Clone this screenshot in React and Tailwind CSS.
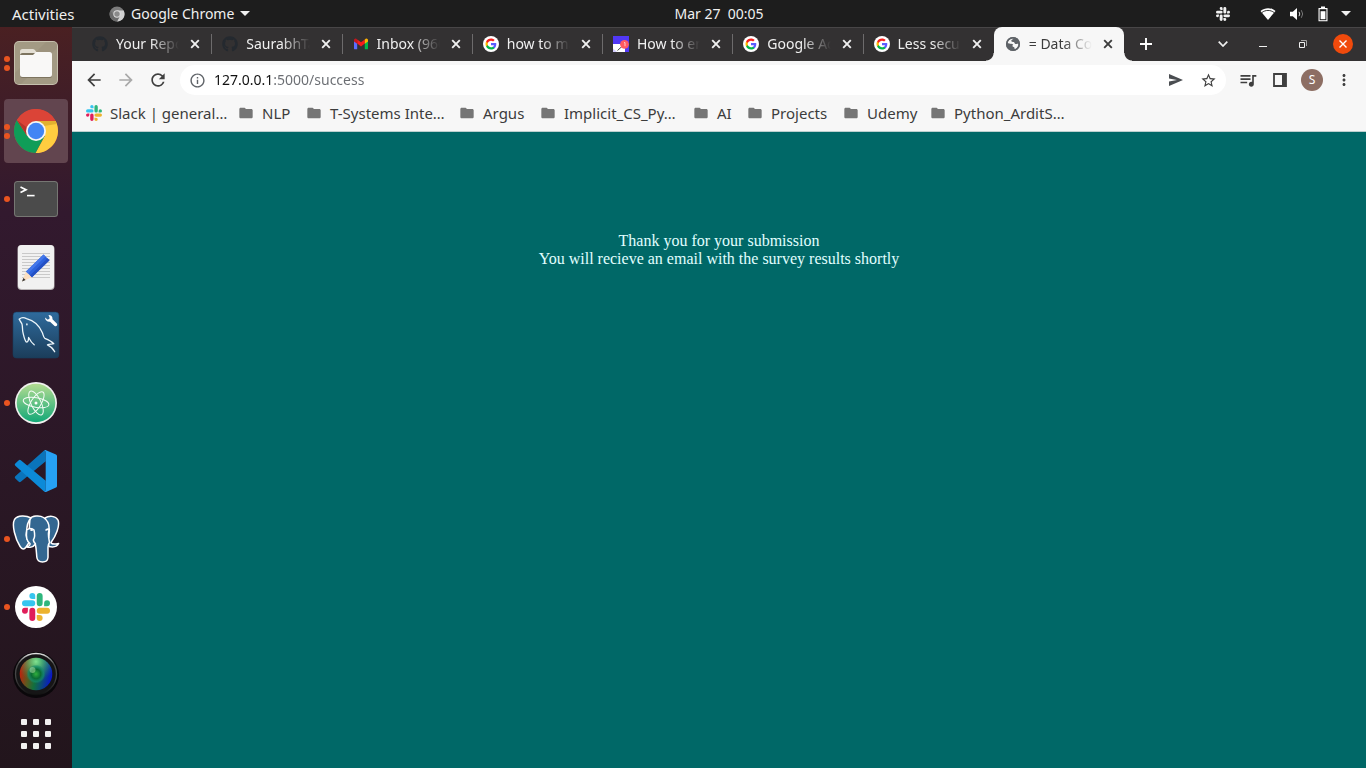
import React from "react";
import { FaGithub } from "react-icons/fa";
import {
  MdArrowBack,
  MdArrowForward,
  MdRefresh,
  MdInfoOutline,
  MdOutlineStarBorder,
  MdQueueMusic,
  MdMoreVert,
  MdFolder,
} from "react-icons/md";

const SLACK_RED =
  "M5.042 15.165a2.528 2.528 0 0 1-2.52 2.523A2.528 2.528 0 0 1 0 15.165a2.527 2.527 0 0 1 2.522-2.52h2.52v2.52zM6.313 15.165a2.527 2.527 0 0 1 2.521-2.52 2.527 2.527 0 0 1 2.521 2.52v6.313A2.528 2.528 0 0 1 8.834 24a2.528 2.528 0 0 1-2.521-2.522v-6.313z";
const SLACK_BLUE =
  "M8.834 5.042a2.528 2.528 0 0 1-2.521-2.52A2.528 2.528 0 0 1 8.834 0a2.528 2.528 0 0 1 2.521 2.522v2.52H8.834zM8.834 6.313a2.528 2.528 0 0 1 2.521 2.521 2.528 2.528 0 0 1-2.521 2.521H2.522A2.528 2.528 0 0 1 0 8.834a2.528 2.528 0 0 1 2.522-2.521h6.312z";
const SLACK_GREEN =
  "M18.956 8.834a2.528 2.528 0 0 1 2.522-2.521A2.528 2.528 0 0 1 24 8.834a2.528 2.528 0 0 1-2.522 2.521h-2.522V8.834zM17.688 8.834a2.528 2.528 0 0 1-2.523 2.521 2.527 2.527 0 0 1-2.52-2.521V2.522A2.527 2.527 0 0 1 15.165 0a2.528 2.528 0 0 1 2.523 2.522v6.312z";
const SLACK_YELLOW =
  "M15.165 18.956a2.528 2.528 0 0 1 2.523 2.522A2.528 2.528 0 0 1 15.165 24a2.527 2.527 0 0 1-2.52-2.522v-2.522h2.52zM15.165 17.688a2.527 2.527 0 0 1-2.52-2.523 2.526 2.526 0 0 1 2.52-2.52h6.313A2.527 2.527 0 0 1 24 15.165a2.528 2.528 0 0 1-2.522 2.523h-6.313z";

function SlackMark({ className, mono }) {
  return (
    <svg viewBox="0 0 24 24" className={className} aria-hidden="true">
      <path d={SLACK_RED} fill={mono || "#e01e5a"} />
      <path d={SLACK_BLUE} fill={mono || "#36c5f0"} />
      <path d={SLACK_GREEN} fill={mono || "#2eb67d"} />
      <path d={SLACK_YELLOW} fill={mono || "#ecb22e"} />
    </svg>
  );
}

function GoogleIcon() {
  return (
    <svg viewBox="0 0 32 32" className="size-4" aria-hidden="true">
      <circle cx="16" cy="16" r="16" fill="#fff" />
      <g transform="translate(4 4)">
        <path fill="#5b5cff" d="M22.56 12.25c0-.78-.07-1.53-.2-2.25H12v4.26h5.92c-.26 1.37-1.04 2.53-2.21 3.31v2.77h3.57c2.08-1.92 3.28-4.74 3.28-8.09z" />
        <path fill="#00b84a" d="M12 23c2.97 0 5.46-.98 7.28-2.66l-3.57-2.77c-.98.66-2.23 1.06-3.71 1.06-2.86 0-5.29-1.93-6.16-4.53H2.18v2.84C3.99 20.53 7.7 23 12 23z" />
        <path fill="#ffb400" d="M5.84 14.09c-.22-.66-.35-1.36-.35-2.09s.13-1.43.35-2.09V7.07H2.18C1.43 8.55 1 10.22 1 12s.43 3.45 1.18 4.93l3.66-2.84z" />
        <path fill="#f8201c" d="M12 5.38c1.62 0 3.06.56 4.21 1.64l3.15-3.15C17.45 2.09 14.97 1 12 1 7.7 1 3.99 3.47 2.18 7.07l3.66 2.84c.87-2.6 3.3-4.53 6.16-4.53z" />
      </g>
    </svg>
  );
}

function GmailIcon() {
  return (
    <svg viewBox="0 0 16 16" className="size-4" aria-hidden="true">
      <path d="M1 5v7.4c0 .5.4.9.9.9h2.3V6.6L1 4.4z" fill="#5b6cff" />
      <path d="M11.8 6.6v6.7h2.3c.5 0 .9-.4.9-.9V4.6z" fill="#00b84a" />
      <path d="M4.2 3.4v4.2L8 10.4l3.8-2.8V3.4L8 6.2z" fill="#f81c1c" />
      <path d="M1 4.4v1l3.2 2.3V3.4l-.7-.5C2.400 2.100 1 2.900 1 4.400z" fill="#c4161c" />
      <path d="M15 4.400v1l-3.200 2.300V3.400l.7-.5C13.600 2.100 15 2.900 15 4.400z" fill="#ffb400" />
    </svg>
  );
}

function ArticleIcon() {
  return (
    <svg viewBox="0 0 16 16" className="size-4" aria-hidden="true">
      <path d="M0 0h16v16H0z" fill="#5138f6" />
      <path d="M0 8h8l4 4v4H0z" fill="#fff" />
      <path d="M4.500 14.500L10 9.500" stroke="#333" strokeWidth=".9" fill="none" />
      <path d="M0 12.500l4 3.500H0z" fill="#5138f6" opacity=".25" />
      <circle cx="11.500" cy="8.300" r="4.400" fill="#ff5a5f" />
      <path d="M11 6.600h1v3.600" stroke="#ffd4d4" strokeWidth=".9" fill="none" />
    </svg>
  );
}

function GlobeIcon() {
  return (
    <svg viewBox="0 0 16 16" className="size-4" aria-hidden="true">
      <circle cx="8" cy="8" r="7" fill="#5f6368" />
      <path d="M8.600 2.500C7.800 3.600 6.400 3.500 6.300 4.700c0 1.200 1.500 1 2.500 1.300 1 .4.500 1.700 1.500 2 1 .2 1.700-.6 2.900-.2.600 1.800-.6 4.200-3 5.200-1.100.2-.5-1.100-1-1.700-.6-.6-1.700-.2-2.300-1 .2-1 1.200-.8 1.300-1.600-.4-1-1.800-.6-2.800-.9-1-.2-1.800-.9-2.600-.5.100-2.700 2.400-5 5.800-4.800z" fill="#f7f7f7" />
      <circle cx="8" cy="8" r="6.300" fill="none" stroke="#5f6368" strokeWidth="1.500" />
    </svg>
  );
}

function ChromeIcon({ className }) {
  return (
    <svg viewBox="0 0 44 44" className={className} aria-hidden="true">
      <circle cx="22" cy="22" r="22" fill="#db4437" />
      <path d="M22 12H41.600A22 22 0 0 1 21.500 44L30.700 27z" fill="#ffcd40" />
      <path d="M22 12h19.600l1 3L30 17z" fill="#e2b130" />
      <path d="M2.900 11A22 22 0 0 0 21.500 44L30.700 27 13.300 27z" fill="#0f9d58" />
      <path d="M2.900 11A22 22 0 0 1 41.600 12H22L13.300 27z" fill="#db4437" />
      <path d="M2.900 11l10.400 16-1-9z" fill="#b5352b" />
      <circle cx="22" cy="22" r="10" fill="#f5f5f5" />
      <circle cx="22" cy="22" r="8.200" fill="#4285f4" />
    </svg>
  );
}

function ChromeGrayIcon() {
  return (
    <svg viewBox="0 0 16 16" className="size-4" aria-hidden="true">
      <circle cx="8" cy="8" r="7.500" fill="#7c7c7c" />
      <path d="M8 4.500h6.700A7.500 7.500 0 0 1 8 15.500L11 9.800z" fill="#d2d2d2" />
      <path d="M1.400 4.500A7.500 7.500 0 0 0 8 15.500L11 9.800 5 9.800z" fill="#6b6b6b" />
      <circle cx="8" cy="8" r="3.700" fill="#dcdcdc" />
      <circle cx="8" cy="8" r="2.700" fill="#8a8a8a" />
    </svg>
  );
}

function FilesIcon() {
  return (
    <svg viewBox="0 0 48 48" className="size-12" aria-hidden="true">
      <rect x="2" y="2" width="44" height="44" rx="5" fill="#c6c0ae" />
      <rect x="3" y="3" width="42" height="42" rx="4" fill="#a39a84" />
      <path d="M3 34L34 3h7a4 4 0 0 1 4 4v2L9 45H7a4 4 0 0 1-4-4z" fill="#999079" opacity=".6" />
      <path d="M8 12.500a2.500 2.500 0 0 1 2.500-2.500h10.200a3 3 0 0 1 2.200 1L25 14v6H8z" fill="#e4dfd4" />
      <rect x="8" y="14" width="32" height="25" rx="2.500" fill="#7d745f" />
      <path d="M8 16h13l3-3h13.500a2.500 2.500 0 0 1 2.500 2.500v20a2.500 2.500 0 0 1-2.500 2.500h-27A2.500 2.500 0 0 1 8 35.500z" fill="#f9f8f7" />
    </svg>
  );
}

function TerminalIcon() {
  return (
    <svg viewBox="0 0 48 48" className="size-12" aria-hidden="true">
      <rect x="2" y="6" width="44" height="36" rx="3.500" fill="#767773" />
      <rect x="3" y="7" width="42" height="34" rx="2.500" fill="#4b4b4b" />
      <path d="M8.500 12l5.500 2.700-5.500 2.800" stroke="#fff" strokeWidth="1.700" fill="none" />
      <path d="M15 20.600h7.600" stroke="#fff" strokeWidth="1.600" />
    </svg>
  );
}

function EditorIcon() {
  return (
    <svg viewBox="0 0 48 48" className="size-12" aria-hidden="true">
      <rect x="5.500" y="2" width="37" height="45" rx="4" fill="#b7b3b4" />
      <rect x="6" y="2" width="36" height="44" rx="4" fill="#f1f1f1" />
      <path d="M10 10.500h28M10 13.500h28M10 16.500h28M10 19.500h28M10 22.500h28M10 25.500h28M10 28.500h28M10 31.500h28M10 34.500h28" stroke="#c9c9c9" />
      <path d="M10 38.500l4-10 6 5.800z" fill="#fbdfc0" />
      <path d="M10 38.500l1.400-3.500 2.200 2.100z" fill="#333" />
      <path d="M14 28.500L31.500 11.500l6 5.800L20 34.300z" fill="#2c62dd" />
      <path d="M14 28.500L31.500 11.500l2 2L16 30.500z" fill="#4478ea" />
      <path d="M18 32.500L35.500 15.300l2 2L20 34.300z" fill="#2350c4" />
    </svg>
  );
}

function MysqlIcon() {
  return (
    <svg viewBox="0 0 48 48" className="size-12" aria-hidden="true">
      <defs>
        <linearGradient id="sea" x1="0" y1="0" x2="0" y2="1">
          <stop offset="0" stopColor="#2f6b9d" />
          <stop offset="1" stopColor="#1b3d5a" />
        </linearGradient>
      </defs>
      <rect x="1" y="1" width="46" height="46" rx="3.500" fill="url(#sea)" stroke="#1a3d5c" strokeWidth=".6" />
      <g fill="none" stroke="#edf6fb" strokeWidth="1.300" strokeLinejoin="round" strokeLinecap="round">
        <path d="M7.300 8.200C9 6.500 12 6.200 14.500 7.600 22 9.500 27.500 14.500 30.500 22c.8 2.500 1 4.300 2.300 5.300 2.500 1 6.500 2.700 9 5.400-2 .6-4.500.4-6.300 1.200 2.500 1.200 5.500 3.400 7.200 6.800" />
        <path d="M7.300 8.200c.4 2 2.200 3 2.700 5 .8 3 .2 5.500 1 8.500.6 2.500 1.500 7.500 3.300 9.300 1.600.6 2.200-1.600 2.300-4.500 1.600 3 3.200 5.500 5.600 7.300" />
      </g>
      <ellipse cx="14.900" cy="13.400" rx=".8" ry="1.100" fill="#edf6fb" />
      <path d="M33 6.500l2.800 2.300 2-1.500L36.500 4c2.600 0 4.300 1.500 4 4.300l4.500 4.500c.9 1.600-1 3.200-2.400 2.200L38 10.700c-2.600.3-5-1.300-5-4.200z" fill="#fff" />
    </svg>
  );
}

function AtomIcon() {
  return (
    <svg viewBox="0 0 48 48" className="size-12" aria-hidden="true">
      <defs>
        <linearGradient id="leaf" x1="0" y1="0" x2="0" y2="1">
          <stop offset="0" stopColor="#b3dc91" />
          <stop offset="1" stopColor="#13a877" />
        </linearGradient>
      </defs>
      <circle cx="24" cy="24" r="21" fill="#f1f1ef" />
      <circle cx="24" cy="24" r="19.300" fill="url(#leaf)" />
      <g fill="none" stroke="#f4fbf6" strokeWidth="1">
        <ellipse cx="24" cy="23.500" rx="13" ry="4.800" transform="rotate(10 24 24)" />
        <ellipse cx="24" cy="24" rx="13" ry="5" transform="rotate(64 24 24)" />
        <ellipse cx="24" cy="24" rx="13" ry="5" transform="rotate(122 24 24)" />
      </g>
      <circle cx="24" cy="24" r="1.500" fill="#fff" />
    </svg>
  );
}

function CodeIcon() {
  return (
    <svg viewBox="0 0 48 48" className="size-12" aria-hidden="true">
      <path d="M33.700 3v11.300L8.800 34.700a1.500 1.500 0 0 1-2 0L3.300 31.500a1.500 1.500 0 0 1 0-2.200L31.500 3.900z" fill="#0a74bb" />
      <path d="M33.700 45V33.700L8.800 13.300a1.500 1.500 0 0 0-2 0l-3.500 3.200a1.500 1.500 0 0 0 0 2.200l28.200 25.400z" fill="#0c8ad8" />
      <path d="M34 3.200L44 7.400c.7.300 1 .9 1 1.600v30c0 .7-.3 1.300-1 1.600L34 44.900c-1 .3-2 0-2.700-.7 1 .8 2.400.2 2.400-1.200V5c0-1.300-1.400-2-2.400-1.100.7-.7 1.700-1 2.700-.7z" fill="#26a1f4" />
    </svg>
  );
}

function PostgresIcon() {
  return (
    <svg viewBox="0 0 48 48" className="size-12" aria-hidden="true">
      <g fill="#336791" stroke="#fff" strokeWidth="1.500" strokeLinejoin="round" strokeLinecap="round">
        <path d="M33 3C37 .4 43.500.6 46 5c2.300 6-2.500 16.500-7 22.500.3 1.400 4 1.700 7.600 1-1.600 3.200-6 3.800-9.600 3l-2-13z" />
        <path d="M18 3.500C20 1 27.500-.2 31.500 2.500c4.500 3 6.500 9 5 15.500-.3 3.500.5 6 1 9.500-1.200 1.500-1.600 2.500-1.500 5v10c-.3 2.700-2.500 4.500-5.500 4.500-3.500 0-5.400-1.800-5.700-5-.4-4.500-.5-8.500-1.300-12-3-1-6.500-3.500-7-7z" />
        <path d="M19 3C14.500.4 5.500-.2 2.500 4.500c-3 5.500.8 19.500 5.600 27 2 3.200 4 3.200 6 .5l3-4.500c-2.700-3-3.500-6-2.600-10 .5-6 .5-10.500 4.500-14.500z" />
        <path d="M14.700 15c2.500-1.800 5.500-1.800 7.300 0 .8 3.500 1.500 6.500-.5 9.500-.6 1.500.8 3 2 4.500-2.500 3.500-6.500 3.800-9 2.700 2-.4 3.800-1.700 3.500-3.200-3.500-2.500-4-6-3.300-13.500z" />
        <path d="M34 15c1.200-1 2.500-1.200 3.300-1 .3 4-.6 6.500-.5 8.500" fill="none" />
      </g>
      <ellipse cx="19.600" cy="15" rx="1.500" ry=".9" fill="#fff" />
      <ellipse cx="35" cy="14.600" rx="1.300" ry=".8" fill="#fff" />
    </svg>
  );
}

function LensIcon() {
  return (
    <svg viewBox="0 0 48 48" className="size-12" aria-hidden="true">
      <defs>
        <linearGradient id="rim" x1="0" y1="0" x2="0" y2="1">
          <stop offset="0" stopColor="#e0e0e0" />
          <stop offset=".25" stopColor="#4a4a4a" />
          <stop offset=".6" stopColor="#444" />
          <stop offset="1" stopColor="#111" />
        </linearGradient>
        <linearGradient id="glass" x1="0" y1=".4" x2="1" y2=".6">
          <stop offset="0" stopColor="#c81c0a" />
          <stop offset=".28" stopColor="#5a5a20" />
          <stop offset=".5" stopColor="#12703c" />
          <stop offset=".72" stopColor="#0c4c78" />
          <stop offset="1" stopColor="#0a10d0" />
        </linearGradient>
        <radialGradient id="shine" cx=".5" cy=".12" r=".6">
          <stop offset="0" stopColor="#8cf09c" stopOpacity=".9" />
          <stop offset="1" stopColor="#20a060" stopOpacity="0" />
        </radialGradient>
        <radialGradient id="glow">
          <stop offset="0" stopColor="#2fae3c" />
          <stop offset=".5" stopColor="#0a6c34" />
          <stop offset=".8" stopColor="#128a6a" stopOpacity=".7" />
          <stop offset="1" stopColor="#128a6a" stopOpacity="0" />
        </radialGradient>
      </defs>
      <circle cx="24" cy="24" r="23" fill="#0a070a" />
      <circle cx="24" cy="23" r="20.500" fill="#161516" stroke="url(#rim)" strokeWidth="1.300" />
      <circle cx="24" cy="23" r="16.300" fill="url(#glass)" />
      <circle cx="24" cy="23" r="16.300" fill="url(#shine)" />
      <circle cx="24" cy="23" r="9.500" fill="url(#glow)" />
      <circle cx="20.500" cy="19" r="3" fill="#c8f0b0" opacity=".45" />
    </svg>
  );
}

function SlackDockIcon() {
  return (
    <span className="flex size-[42px] items-center justify-center rounded-full bg-white">
      <SlackMark className="size-7" />
    </span>
  );
}

const DOCK = [
  { name: "Files", dots: 2, Icon: FilesIcon },
  { name: "Google Chrome", dots: 2, Icon: () => <ChromeIcon className="size-11" />, active: true },
  { name: "Terminal", dots: 1, Icon: TerminalIcon },
  { name: "Text Editor", dots: 0, Icon: EditorIcon },
  { name: "MySQL Workbench", dots: 0, Icon: MysqlIcon },
  { name: "Atom", dots: 1, Icon: AtomIcon },
  { name: "Visual Studio Code", dots: 0, Icon: CodeIcon },
  { name: "pgAdmin", dots: 1, Icon: PostgresIcon },
  { name: "Slack", dots: 1, Icon: SlackDockIcon },
  { name: "Camera", dots: 0, Icon: LensIcon },
];

const Github = () => <FaGithub className="size-4 text-[#24292f]" />;

const TABS = [
  { title: "Your Repo", Icon: Github },
  { title: "SaurabhTa", Icon: Github },
  { title: "Inbox (960", Icon: GmailIcon },
  { title: "how to ma", Icon: GoogleIcon },
  { title: "How to en", Icon: ArticleIcon },
  { title: "Google Ac", Icon: GoogleIcon },
  { title: "Less secur", Icon: GoogleIcon },
];

const BOOKMARKS = [
  { label: "Slack | general…", width: "w-[152px]", slack: true },
  { label: "NLP", width: "w-[68px]" },
  { label: "T-Systems Inte…", width: "w-[153px]" },
  { label: "Argus", width: "w-[81px]" },
  { label: "Implicit_CS_Py…", width: "w-[153px]" },
  { label: "AI", width: "w-[54px]" },
  { label: "Projects", width: "w-[96px]" },
  { label: "Udemy", width: "w-[87px]" },
  { label: "Python_ArditS…", width: "w-[153px]" },
];

function CloseMark() {
  return (
    <svg viewBox="0 0 10 10" className="size-[10px]" aria-hidden="true">
      <path d="M1.200 1.200l7.600 7.600M8.800 1.200L1.200 8.800" stroke="currentColor" strokeWidth="1.900" />
    </svg>
  );
}

function Tab({ title, Icon, active }) {
  return (
    <div
      className={
        active
          ? "relative flex h-full min-w-0 flex-1 items-center rounded-t-lg bg-[#f7f7f7] pl-[11px] text-[#3c3c3c] before:absolute before:bottom-0 before:-left-2 before:size-2 before:bg-[radial-gradient(circle_at_0_0,#333132_7px,#f7f7f7_8px)] after:absolute after:-right-2 after:bottom-0 after:size-2 after:bg-[radial-gradient(circle_at_100%_0,#333132_7px,#f7f7f7_8px)]"
          : "flex h-5 min-w-0 flex-1 items-center border-r border-[#6d6b6c] pl-[10px] text-[#f0f0f0] nth-7:border-transparent"
      }
    >
      <button type="button" role="tab" aria-selected={!!active} className="flex min-w-0 flex-1 items-center gap-2">
        <span className="flex size-4 shrink-0 items-center justify-center">
          <Icon />
        </span>
        <span className="min-w-0 flex-1 text-left whitespace-nowrap [mask-image:linear-gradient(to_right,#000_55%,transparent)]">
          {title}
        </span>
      </button>
      <button type="button" aria-label={`Close ${title}`} className="flex w-8 shrink-0 items-center justify-center">
        <CloseMark />
      </button>
    </div>
  );
}

function TopBar() {
  return (
    <header className="grid h-[27px] grid-cols-[72px_1fr_auto_1fr] items-center bg-[#1d1d1d] text-[#f0f0f0]">
      <button type="button" className="pl-3 text-left text-[15px] whitespace-nowrap">Activities</button>
      <button type="button" className="flex items-center gap-[6px] pl-[37px]">
        <ChromeGrayIcon />
        Google Chrome
        <svg viewBox="0 0 10 5" className="h-[5px] w-[10px]" aria-hidden="true">
          <path d="M0 0h10L5 5z" fill="currentColor" />
        </svg>
      </button>
      <button type="button" className="whitespace-pre">{"Mar 27  00:05"}</button>
      <div className="flex items-center justify-end pr-[15px]">
        <button type="button" aria-label="Slack" className="mr-[30px]">
          <SlackMark className="size-[14px]" mono="#f0f0f0" />
        </button>
        <button type="button" aria-label="System menu" className="flex items-center gap-[13px]">
          <svg viewBox="0 0 16 14" className="h-[14px] w-4" aria-hidden="true">
            <path d="M.5 4C5 .2 11 .2 15.500 4L8 13z" fill="#fff" />
            <path d="M1.800 5.600C5.500 2.700 10.500 2.700 14.200 5.600" stroke="#1d1d1d" strokeWidth=".9" fill="none" />
          </svg>
          <svg viewBox="0 0 16 14" className="h-[14px] w-4" aria-hidden="true">
            <path d="M1 4.700h2.800L8 1v12L3.800 9.300H1z" fill="#fff" />
            <path d="M10 4.800q1.600 2.200 0 4.400" stroke="#ddd" strokeWidth="1" fill="none" />
            <path d="M12.300 3.200q2.800 3.800 0 7.600" stroke="#777" strokeWidth="1" fill="none" />
          </svg>
          <svg viewBox="0 0 10 16" className="h-4 w-[10px]" aria-hidden="true">
            <path d="M3 .5h4V2h2.500v13.300H.5V2H3z" fill="#fff" />
            <path d="M1.600 3.200h6.800v11H1.600z" fill="#1d1d1d" />
            <path d="M2.600 5.200h4.800v8H2.600z" fill="#fff" />
          </svg>
          <svg viewBox="0 0 10 5" className="h-[5px] w-[10px]" aria-hidden="true">
            <path d="M0 0h10L5 5z" fill="currentColor" />
          </svg>
        </button>
      </div>
    </header>
  );
}

function Dock() {
  return (
    <nav
      aria-label="Dock"
      className="flex w-[72px] shrink-0 flex-col items-center gap-1 bg-linear-to-b from-[#4a2022] via-[#32192e] via-25% to-[#22151c] pt-1"
    >
      {DOCK.map(({ name, dots, Icon, active }) => (
        <button
          key={name}
          type="button"
          aria-label={name}
          className={
            active
              ? "relative flex size-16 items-center justify-center rounded bg-[#62454f]"
              : "relative flex size-16 items-center justify-center rounded"
          }
        >
          <span className="absolute inset-y-0 left-0 flex flex-col justify-center gap-[3px]">
            {Array.from({ length: dots }, (_, i) => (
              <span key={i} className="size-[6px] rounded-full bg-[#e95420]" />
            ))}
          </span>
          <Icon />
        </button>
      ))}
      <button type="button" aria-label="Show Applications" className="grid h-[46px] grid-cols-3 content-center gap-[6px]">
        {Array.from({ length: 9 }, (_, i) => (
          <span key={i} className="size-[6px] rounded-[1px] bg-[#f2f0f0]" />
        ))}
      </button>
    </nav>
  );
}

function TabStrip() {
  return (
    <div className="flex h-[34px] items-center bg-[#333132] pl-[10px] shadow-[inset_0_1px_#484647]">
      <div role="tablist" className="flex h-full max-w-[1042px] min-w-0 flex-1 items-center">
        {TABS.map((tab, i) => (
          <Tab key={i} {...tab} />
        ))}
        <Tab title="= Data Col" active Icon={GlobeIcon} />
      </div>
      <button type="button" aria-label="New tab" className="flex w-11 justify-center text-white">
        <svg viewBox="0 0 12 12" className="size-3" aria-hidden="true">
          <path d="M6 0v12M0 6h12" stroke="currentColor" strokeWidth="1.900" />
        </svg>
      </button>
      <div className="ml-auto flex items-center text-[#f0f0f0]">
        <button type="button" aria-label="Search tabs" className="flex w-10 justify-center">
          <svg viewBox="0 0 10 6" className="h-[6px] w-[10px]" aria-hidden="true">
            <path d="M.7.700L5 5 9.300.700" stroke="currentColor" strokeWidth="1.700" fill="none" />
          </svg>
        </button>
        <button type="button" aria-label="Minimize" className="flex h-5 w-10 items-center justify-center pt-1">
          <span className="h-px w-2 bg-[#f0f0f0]" />
        </button>
        <button type="button" aria-label="Restore" className="flex w-10 justify-center">
          <svg viewBox="0 0 8 8" className="size-2" aria-hidden="true">
            <path d="M.5 2.500h5v5h-5z" stroke="currentColor" fill="none" />
            <path d="M2 .5h5.500V6" stroke="#a5a4a4" fill="none" />
          </svg>
        </button>
        <button type="button" aria-label="Close window" className="mr-[13px] ml-[10px] flex size-5 items-center justify-center rounded-full bg-[#f04a0c] text-white">
          <svg viewBox="0 0 8 8" className="size-2" aria-hidden="true">
            <path d="M.5.500l7 7M7.500.500l-7 7" stroke="currentColor" strokeWidth="1.400" />
          </svg>
        </button>
      </div>
    </div>
  );
}

function Toolbar() {
  return (
    <div className="flex items-center bg-[#f7f7f7] pt-1 pr-[6px] pl-[6px] text-[#3f3f3f]">
      <button type="button" aria-label="Back" className="flex w-8 justify-center">
        <MdArrowBack className="size-5" />
      </button>
      <button type="button" aria-label="Forward" className="flex w-8 justify-center text-[#a9a9a9]">
        <MdArrowForward className="size-5" />
      </button>
      <button type="button" aria-label="Reload" className="flex w-8 justify-center">
        <MdRefresh className="size-5" />
      </button>
      <div className="mr-[6px] ml-[6px] flex h-[30px] min-w-0 flex-1 items-center rounded-full bg-white pr-[2px] pl-[9px]">
        <button type="button" aria-label="Site information" className="mr-2 text-[#5f6368]">
          <MdInfoOutline className="size-[17px]" />
        </button>
        <input
          type="text"
          aria-label="Address"
          defaultValue="127.0.0.1:5000/success"
          className="min-w-0 flex-1 bg-[linear-gradient(to_right,#111_59px,#6a6d72_59px)] bg-clip-text text-transparent outline-none"
        />
        <button type="button" aria-label="Share" className="flex w-8 justify-center">
          <svg viewBox="0 0 14 12" className="h-3 w-[14px]" aria-hidden="true">
            <path d="M0 0l14 6L0 12V7.400L8 6 0 4.600z" fill="#4a4d51" />
          </svg>
        </button>
        <button type="button" aria-label="Bookmark this tab" className="flex w-8 justify-center">
          <MdOutlineStarBorder className="size-[17px]" />
        </button>
      </div>
      <button type="button" aria-label="Media controls" className="flex w-8 justify-center">
        <MdQueueMusic className="size-5" />
      </button>
      <button type="button" aria-label="Side panel" className="flex w-8 justify-center">
        <svg viewBox="0 0 14 14" className="size-[14px]" aria-hidden="true">
          <path d="M1 1h12v12H1z" stroke="currentColor" strokeWidth="1.800" fill="none" />
          <path d="M9 1h4v12H9z" fill="currentColor" />
        </svg>
      </button>
      <button type="button" aria-label="Profile" className="flex w-8 justify-center">
        <span className="flex size-[22px] items-center justify-center rounded-full bg-[#8d6e63] text-[12px] text-white">S</span>
      </button>
      <button type="button" aria-label="Menu" className="flex w-8 justify-center">
        <MdMoreVert className="size-[18px]" />
      </button>
    </div>
  );
}

function Bookmarks() {
  return (
    <nav aria-label="Bookmarks" className="flex h-[37px] items-center border-b border-[#bcd0cf] bg-[#f7f7f7] pl-[14px] text-[15px] text-[#3c3c3c]">
      {BOOKMARKS.map(({ label, width, slack }) => (
        <a key={label} href="#" className={`flex shrink-0 items-center gap-2 whitespace-nowrap ${width}`}>
          {slack ? <SlackMark className="size-4" /> : <MdFolder className="size-4 shrink-0 text-[#757575]" />}
          {label}
        </a>
      ))}
    </nav>
  );
}

export default function App() {
  return (
    <div className="flex min-h-screen flex-col font-['Noto_Sans',sans-serif] text-[14px] leading-5">
      <TopBar />
      <div className="flex flex-1">
        <Dock />
        <div className="flex min-w-0 flex-1 flex-col">
          <TabStrip />
          <Toolbar />
          <Bookmarks />
          <main className="flex-1 bg-[#006867] pt-[100px] text-center font-['Liberation_Serif',serif] text-[16px] leading-[18px] text-[#e0ffff]">
            <p>Thank you for your submission</p>
            <p>You will recieve an email with the survey results shortly</p>
          </main>
        </div>
      </div>
    </div>
  );
}
